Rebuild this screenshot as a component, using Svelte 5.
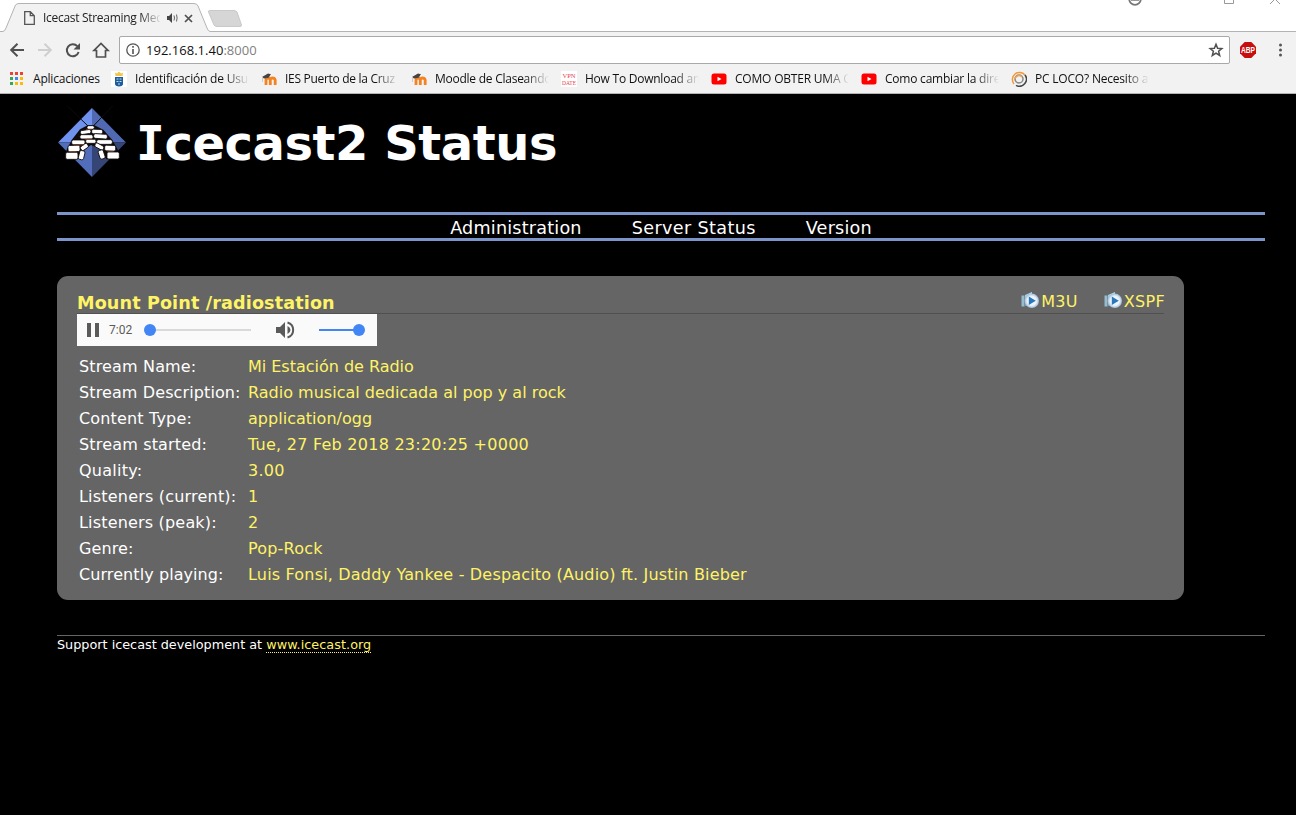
<script>
  const bookmarks = [
    { icon: 'apps', text: 'Aplicaciones', width: 102, spacing: -0.2 },
    { icon: 'crest', text: 'Identificación de Usuario', width: 150, fade: true, spacing: -0.2 },
    { icon: 'moodle', text: 'IES Puerto de la Cruz', width: 150, fade: true, spacing: -0.3 },
    { icon: 'moodle', text: 'Moodle de Claseando', width: 150, fade: true, spacing: -0.25 },
    { icon: 'vpn', text: 'How To Download and', width: 150, fade: true, spacing: -0.24 },
    { icon: 'youtube', text: 'COMO OBTER UMA CONTA', width: 150, fade: true, spacing: -0.2 },
    { icon: 'youtube', text: 'Como cambiar la direccion', width: 150, fade: true, spacing: -0.22 },
    { icon: 'ring', text: 'PC LOCO? Necesito ayuda', width: 150, fade: true, spacing: -0.2 }
  ];
  const appColors = ['#ea4335', '#ea4335', '#ea4335', '#34a853', '#4285f4', '#fbbc05', '#34a853', '#fbbc05', '#fbbc05'];
  // Label, value, and the letter spacing of each
  const rows = [
    ['Stream Name:', 'Mi Estación de Radio', 0.15, -0.02],
    ['Stream Description:', 'Radio musical dedicada al pop y al rock', 0.11, 0.01],
    ['Content Type:', 'application/ogg', 0.16, 0.03],
    ['Stream started:', 'Tue, 27 Feb 2018 23:20:25 +0000', 0.17, 0.25],
    ['Quality:', '3.00', 0.25, 0.25],
    ['Listeners (current):', '1', 0.2, 0],
    ['Listeners (peak):', '2', 0.18, 0],
    ['Genre:', 'Pop-Rock', 0.1, 0.2],
    ['Currently playing:', 'Luis Fonsi, Daddy Yankee - Despacito (Audio) ft. Justin Bieber', 0.08, 0.18]
  ];
  // Igloo blocks: x, y, width, height, rotation
  const stones = [
    [111, 77, 22, 11, 0], [91, 90, 32, 12, -8], [125, 88, 33, 14, 3],
    [90, 104, 39, 13, 0], [131, 102, 41, 14, 4],
    [65, 120, 40, 14, 0], [107, 118, 31, 12, 0], [140, 119, 47, 14, 0],
    [54, 136, 36, 19, -2], [91, 134, 24, 14, -35], [134, 133, 28, 13, 28], [164, 136, 33, 17, 2],
    [47, 157, 37, 21, 0], [87, 152, 16, 27, 14], [147, 150, 16, 27, -18], [171, 156, 37, 21, 0]
  ];
</script>

{#snippet playlist(label)}
  <a class="playlist" href="#list">
    <svg width="20" height="19" viewBox="0 0 20 19">
      <defs>
        <linearGradient id="sheet" x2="0" y2="1"><stop stop-color="#b5e0f2" /><stop offset="1" stop-color="#5b9cc6" /></linearGradient>
        <radialGradient id="disc"><stop stop-color="#fff" /><stop offset=".65" stop-color="#e8f2fb" /><stop offset="1" stop-color="#9fb9d6" /></radialGradient>
      </defs>
      <path d="M1.500 4.500h3v11h-3z" fill="#96bccf" />
      <path d="M5 4l7-3v14H5z" fill="url(#sheet)" />
      <circle cx="11.800" cy="9.800" r="7.200" fill="url(#disc)" />
      <path d="M8.800 5.600l7 4.200-7 4.200z" fill="#2878bb" />
    </svg><span>{label}</span>
  </a>
{/snippet}

<div class="window">
  <div class="tabs">
    <svg class="tabshapes" width="1296" height="32" viewBox="0 0 1296 32">
      <path d="M0 31.500H1296" stroke="#b3b3b3" />
      <path d="M0 31.500H3Q5 31 6 28L15.500 5Q17 3.500 19 3.500H194Q197 3.500 198 6L207 28Q208 31 210 31.500V32H0z" fill="#f2f2f2" />
      <path d="M0 31.500H3Q5 31 6 28L15.500 5Q17 3.500 19 3.500H194Q197 3.500 198 6L207 28Q208 31 210 31.500" fill="none" stroke="#b3b3b3" />
      <path d="M210 10.500H234Q236 10.500 237 12L241.500 25Q241.500 26.500 240 26.500H217Q215 26.500 214 25L208.500 12Q208 10.500 210 10.500z" fill="#d6d6d6" stroke="#c9c9c9" />
      <g fill="none" stroke="#777">
        <circle cx="1135" cy="-1" r="5.800" stroke-width="1.800" /><path d="M1131 0h8" stroke-width="1.500" />
        <path d="M1224.500-6v9.500h9V-6M1270 4l10-10M1280 4l-10-10" stroke="#999" />
      </g>
    </svg>
    <svg class="doc" width="11" height="14" viewBox="0 0 11 14" fill="none" stroke="#555" stroke-width="1.300"><path d="M.7.7h5.600l4 4v8.600H.7zM6.300.7v4h4" /></svg>
    <span class="tabtitle">Icecast Streaming Media</span>
    <svg class="sound" width="12" height="10" viewBox="0 0 12 10"><path d="M0 3h2l3-3v10L2 7H0z" fill="#444" /><path d="M7 2.500q1 2.500 0 5M9.500 1.500q1.200 3.500 0 7" fill="none" stroke="#666" stroke-width="1" /></svg>
    <svg class="close" width="9" height="9" viewBox="0 0 9 9"><path d="M1 1l7 7M8 1l-7 7" stroke="#505050" stroke-width="1.700" /></svg>
  </div>

  <div class="toolbar">
    <svg class="navicons" width="119" height="36" viewBox="0 32 119 36" fill="none" stroke="#505050" stroke-width="2">
      <path d="M24 50H11M17.500 43.700L11.200 50l6.300 6.300" />
      <path d="M38 50h13M44.500 43.700l6.300 6.300-6.300 6.300" stroke="#cfcfcf" />
      <path d="M77.300 46.200A6 6 0 1 0 78.600 52" /><path d="M80 43v6.500h-6.500z" fill="#505050" stroke="none" />
      <path d="M94 50.500h2.500v6.500h9v-6.500h2.500l-7-7z" stroke-width="1.700" />
    </svg>
    <div class="address">
      <svg width="14" height="14" viewBox="0 0 14 14"><circle cx="7" cy="7" r="6.200" fill="none" stroke="#555" stroke-width="1.300" /><path d="M6.200 3h1.600v1.700H6.200zM6.200 6h1.600v5H6.200z" fill="#555" /></svg>
      <span class="url">192.168.1.40<i>:8000</i></span>
      <svg width="16" height="16" viewBox="0 0 16 16"><path d="M8 2.200l1.600 4 4.300.3-3.300 2.800 1.100 4.200L8 11.200l-3.700 2.300 1.100-4.200-3.300-2.800 4.300-.3z" fill="none" stroke="#505050" stroke-width="1.500" /></svg>
    </div>
    <svg class="abp" width="16" height="16" viewBox="0 0 16 16"><path d="M4.700 0h6.600L16 4.700v6.600L11.300 16H4.700L0 11.300V4.700z" fill="#c70d0d" /><text x="8" y="11" text-anchor="middle" textLength="14" lengthAdjust="spacingAndGlyphs">ABP</text></svg>
    <svg width="5" height="14" viewBox="0 0 5 14" fill="#555"><circle cx="2.500" cy="2" r="1.500" /><circle cx="2.500" cy="7" r="1.500" /><circle cx="2.500" cy="12" r="1.500" /></svg>
  </div>

  <div class="bookmarks">
    {#each bookmarks as b}
      <div class="bookmark" style:width="{b.width}px">
        <svg width="16" height="16" viewBox="0 0 16 16">
          {#if b.icon === 'apps'}
            {#each appColors as c, i}<rect x={1 + (i % 3) * 5} y={1 + Math.floor(i / 3) * 5} width="3" height="3" fill={c} />{/each}
          {:else if b.icon === 'crest'}
            <path d="M0 0h16v16H0z" fill="#fff" /><path d="M4 1.500l2 1L8 .5l2 2 2-1L11.500 5h-7z" fill="#f2c64a" /><path d="M4 6h8v7q0 2-4 2.500Q4 15 4 13z" fill="#1d5d9c" /><path d="M5.500 8h2m1 0h2M5.500 10.500h2m1 0h2M7 13h2" stroke="#c8dcee" />
          {:else if b.icon === 'moodle'}
            <path d="M5 14V9q0-2 2-2t2.300 2v5m0-5q0-2 2.200-2t2.700 2v5" fill="none" stroke="#f58220" stroke-width="2.800" /><path d="M1 6l6-3.500 3 .8-2.500 3.500L3 7.500z" fill="#444" /><path d="M1.500 6v5" stroke="#ccc" />
          {:else if b.icon === 'vpn'}
            <path d="M0 0h16v16H0z" fill="#fff" /><text class="vpn" x="8" y="7.400" text-anchor="middle" textLength="13" lengthAdjust="spacingAndGlyphs">VPN</text><text class="vpn" x="8" y="13.600" text-anchor="middle" textLength="14" lengthAdjust="spacingAndGlyphs">DATE</text>
          {:else if b.icon === 'youtube'}
            <rect x=".5" y="2.500" width="15" height="11" rx="2.500" fill="#f00" /><path d="M6.500 5.800L10.500 8l-4 2.200z" fill="#fff" />
          {:else}
            <g fill="none" stroke-width="1.500"><path d="M3 13A7 7 0 1 1 14 4" stroke="#f39a36" /><path d="M14 4A7 7 0 0 1 5 14.300" stroke="#444" /><circle cx="8" cy="8" r="4" stroke="#888" /><path d="M4 8a4 4 0 0 1 7-2" stroke="#f0a050" /></g>
          {/if}
        </svg>
        <span class:fade={b.fade} style:letter-spacing="{b.spacing}px">{b.text}</span>
      </div>
    {/each}
  </div>

  <main>
    <header>
      <svg width="70" height="72" viewBox="0 0 70 72">
        <path d="M35 2L1 36.500h34z" fill="#6e92ee" /><path d="M35 2l34 34.500H35z" fill="#5069b2" /><path d="M1 36.500L35 71V36.500z" fill="#526dba" /><path d="M69 36.500L35 71V36.500z" fill="#354676" />
        <g transform="scale(.33333) translate(-21 -18)">
          <path d="M52 18l64 62M188 18l-58 60" stroke="#0c0c0c" stroke-width="3" />
          <path d="M47 178V155l18-35 25-32 24-13h18l28 14 27 31 20 35v23h-38l-20-32-26-11-17 12-22 31z" fill="#100b0b" />
          <g fill="#fff" stroke="#100b0b" stroke-width="2.500">
            {#each stones as [x, y, w, h, r]}<rect {x} {y} width={w} height={h} rx="5" transform="rotate({r} {x + w / 2} {y + h / 2})" />{/each}
          </g>
          <path d="M108 88h18M104 118h24M72 135h30M60 155h20M172 154h18" stroke="#934b35" stroke-width="2" />
        </g>
      </svg>
      <h1><span>I</span>cecast2 Status</h1>
    </header>
    <nav><a href="#admin">Administration</a><a href="#status">Server Status</a><a href="#version">Version</a></nav>

    <section>
      <div class="mounthead">
        <h2>Mount Point /radiostation</h2>
        <div class="playlists">{@render playlist('M3U')}{@render playlist('XSPF')}</div>
      </div>
      <div class="player">
        <svg width="300" height="32" viewBox="0 0 300 32">
          <path d="M10 9h4v14h-4zM18 9h4v14h-4z" fill="#5a5a5a" />
          <path d="M73 16h101" stroke="#d9d9d9" stroke-width="2" /><circle cx="73" cy="16" r="6" fill="#4285f4" />
          <path d="M199 13h4l5-5v16l-5-5h-4z" fill="#5a5a5a" /><path d="M210.500 12q3 1.500 3 4t-3 4z" fill="#5a5a5a" /><path d="M210.500 8.500a7.800 7.800 0 0 1 0 15" fill="none" stroke="#5a5a5a" stroke-width="2" />
          <path d="M242 16h40" stroke="#4285f4" stroke-width="2" /><circle cx="282" cy="16" r="6" fill="#4285f4" />
          <text x="32" y="20">7:02</text>
        </svg>
      </div>
      <div class="details">
        {#each rows as [name, value, nameSpacing, valueSpacing]}
          <span style:letter-spacing="{nameSpacing}px">{name}</span>
          <span class="value" style:letter-spacing="{valueSpacing}px">{value}</span>
        {/each}
      </div>
    </section>
    <footer>Support icecast development at <a href="#icecast">www.icecast.org</a></footer>
  </main>
</div>

<style>
  :global(body) { margin: 0; background: #000; overflow: hidden; }
  svg { display: block; flex: none; }
  a { color: inherit; text-decoration: none; }
  .window { width: 1296px; height: 815px; overflow: hidden; background: #000; }
  .tabs { position: relative; height: 32px; box-sizing: border-box; background: #fff; display: flex; align-items: center; padding: 4px 0 0 24px; font: 12px/16px "Open Sans", sans-serif; color: #222; }
  .tabshapes { position: absolute; left: 0; top: 0; }
  .doc, .tabtitle, .sound, .close { position: relative; }
  .tabtitle { width: 117px; margin-left: 8px; overflow: hidden; white-space: nowrap; letter-spacing: -.3px; mask-image: linear-gradient(90deg, #000 96px, transparent 119px); }
  .sound { margin-left: 7px; }
  .close { margin-left: 5px; }
  .toolbar { height: 36px; background: #f2f2f2; display: flex; align-items: center; }
  .address { width: 1111px; height: 28px; box-sizing: border-box; border: 1px solid #a9a9a9; border-radius: 2px; background: #fff; display: flex; align-items: center; padding: 0 5px 0 6px; }
  .url { flex: 1; margin-left: 6px; font: 13px/20px "Open Sans", sans-serif; color: #111; letter-spacing: .02px; }
  .url i { font-style: normal; color: #808080; }
  .abp { margin: 0 22px 0 10px; }
  .abp text { font: bold 8.500px "Liberation Sans", sans-serif; fill: #fff; }
  .bookmarks { height: 26px; box-sizing: border-box; padding: 0 0 4px 9px; border-bottom: 1px solid #b3b3b3; background: #f2f2f2; display: flex; align-items: center; font: 12px/16px "Open Sans", sans-serif; color: #111; }
  .bookmark { display: flex; align-items: center; gap: 8px; flex: none; }
  .bookmark span { white-space: nowrap; overflow: hidden; }
  .bookmark .fade { width: 114px; mask-image: linear-gradient(90deg, #000 90px, transparent 114px); }
  .vpn { font: 6.500px "Liberation Serif", serif; fill: #e8404e; }
  main { padding: 12px 31px 0 57px; font-family: Verdana, "DejaVu Sans", sans-serif; color: #fff; }
  header { height: 72px; display: flex; align-items: center; gap: 9px; }
  h1 { margin: 2px 0 0; font-size: 48px; line-height: 60px; letter-spacing: -.46px; white-space: nowrap; }
  h1 span { font-family: "DejaVu Sans Mono", monospace; }
  nav { margin-top: 34px; height: 29px; box-sizing: border-box; border: solid #7b94c9; border-width: 3px 0; display: flex; justify-content: center; gap: 50px; font-size: 17.600px; line-height: 27px; letter-spacing: .2px; }
  nav a:nth-child(2) { letter-spacing: .36px; }
  section { width: 1127px; height: 324px; box-sizing: border-box; margin-top: 35px; border-radius: 11px; background: #656565; padding: 15px 20px; color: #fff366; }
  .mounthead { height: 23px; box-sizing: border-box; border-bottom: 1px solid #505050; display: flex; justify-content: space-between; }
  h2 { margin: 0; font-size: 17.600px; line-height: 24px; letter-spacing: .12px; }
  .playlists { display: flex; gap: 25px; font-size: 16px; line-height: 22px; letter-spacing: .3px; margin-right: -1px; }
  .playlist { display: flex; gap: 1px; }
  .player { width: 300px; height: 32px; background: #fafafa; }
  .player text { font: 12px Roboto, sans-serif; fill: #5a5a5a; }
  .details { margin: 8px 0 0 2px; display: grid; grid-template-columns: 169px auto; grid-auto-rows: 26px; line-height: 26px; font-size: 16px; color: #fff; white-space: nowrap; }
  .value { color: #fff366; }
  footer { margin-top: 35px; border-top: 1px solid #656565; font-size: 12.800px; line-height: 18px; }
  footer a { color: #fff366; border-bottom: 1px dotted #fff366; letter-spacing: .05px; }
</style>
